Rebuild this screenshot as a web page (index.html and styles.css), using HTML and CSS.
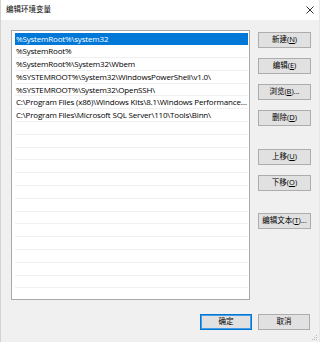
FILE: index.html
```html
<!DOCTYPE html>
<html lang="zh-CN">
<head>
<meta charset="utf-8">
<title>编辑环境变量</title>
<link rel="stylesheet" href="styles.css">
</head>
<body>
<div class="window">
  <div class="titlebar">
    <span class="title">编辑环境变量</span>
    <svg class="close" width="8" height="8" viewBox="0 0 8 8"><path d="M0.5 0.5 L7.5 7.5 M7.5 0.5 L0.5 7.5" stroke="#1a1a1a" stroke-width="0.9" fill="none"/></svg>
  </div>
  <div class="body">
    <div class="content">
      <div class="list">
        <div class="row selected">%SystemRoot%\system32</div>
        <div class="row">%SystemRoot%</div>
        <div class="row">%SystemRoot%\System32\Wbem</div>
        <div class="row">%SYSTEMROOT%\System32\WindowsPowerShell\v1.0\</div>
        <div class="row">%SYSTEMROOT%\System32\OpenSSH\</div>
        <div class="row">C:\Program Files (x86)\Windows Kits\8.1\Windows Performance Toolkit\</div>
        <div class="row">C:\Program Files\Microsoft SQL Server\110\Tools\Binn\</div>
        <div class="row"></div>
        <div class="row"></div>
        <div class="row"></div>
        <div class="row"></div>
        <div class="row"></div>
        <div class="row"></div>
        <div class="row"></div>
        <div class="row"></div>
        <div class="row"></div>
        <div class="row"></div>
        <div class="row"></div>
        <div class="row"></div>
        <div class="row"></div>
        <div class="row"></div>
      </div>
      <div class="side">
        <div class="btn">新建(<u>N</u>)</div>
        <div class="btn">编辑(<u>E</u>)</div>
        <div class="btn">浏览(<u>B</u>)...</div>
        <div class="btn">删除(<u>D</u>)</div>
        <div class="btn group">上移(<u>U</u>)</div>
        <div class="btn">下移(<u>O</u>)</div>
        <div class="btn group2">编辑文本(<u>T</u>)...</div>
      </div>
    </div>
    <div class="footer">
      <div class="btn default">确定</div>
      <div class="btn">取消</div>
    </div>
  </div>
  <svg class="grip" width="7" height="7" viewBox="0 0 7 7" fill="#b9b9b9">
    <rect x="5" y="1" width="1" height="1"/>
    <rect x="3" y="3" width="1" height="1"/><rect x="5" y="3" width="1" height="1"/>
    <rect x="1" y="5" width="1" height="1"/><rect x="3" y="5" width="1" height="1"/><rect x="5" y="5" width="1" height="1"/>
  </svg>
</div>
</body>
</html>
```

FILE: styles.css
```css
html, body {
  margin: 0;
  padding: 0;
}
body {
  width: 320px;
  height: 342px;
  overflow: hidden;
  background: #f0f0f0;
  font-family: "Open Sans", "Noto Sans CJK SC", sans-serif;
  font-size: 8px;
  color: #000;
}
.window {
  position: relative;
  width: 320px;
  height: 342px;
  box-sizing: border-box;
  border-left: 1px solid #d6d2cc;
  border-right: 1px solid #e6e6e6;
  display: flex;
  flex-direction: column;
}
.titlebar {
  height: 20px;
  flex: none;
  background: #fff;
  display: flex;
  align-items: center;
  padding: 0 5px 0 5px;
}
.title {
  flex: 1;
  font-size: 7.5px;
  color: #000;
  line-height: 1;
}
.close {
  display: block;
  margin-top: -1px;
}
.body {
  flex: 1;
  display: flex;
  flex-direction: column;
  padding: 10px 0 0 10px;
}
.content {
  display: flex;
  align-items: flex-start;
}
.list {
  width: 239px;
  height: 270px;
  box-sizing: border-box;
  border: 1px solid #a9a9a9;
  background: #fff;
  padding: 1.5px 1px 0 3px;
  overflow: hidden;
}
.row {
  height: 12.8px;
  box-sizing: border-box;
  border-bottom: 1px solid #f0f0f0;
  line-height: 11.8px;
  padding-left: 1px;
  letter-spacing: -0.18px;
  white-space: nowrap;
  overflow: hidden;
  text-overflow: ellipsis;
}
.row.selected {
  background: #0078d7;
  color: #fff;
  border-bottom-color: #0078d7;
}
.side {
  margin-left: 8px;
  padding-top: 2px;
  width: 53px;
  display: flex;
  flex-direction: column;
  gap: 10px;
}
.btn {
  height: 16px;
  box-sizing: border-box;
  border: 1px solid #adadad;
  background: #e1e1e1;
  display: flex;
  align-items: center;
  justify-content: center;
  white-space: nowrap;
  font-size: 7.5px;
  line-height: 1;
}
.btn u {
  text-decoration-thickness: 0.5px;
  text-underline-offset: 1px;
}
.btn.group {
  margin-top: 13px;
}
.btn.group2 {
  margin-top: 12px;
}
.footer {
  margin-top: 14px;
  padding-right: 9px;
  display: flex;
  justify-content: flex-end;
  gap: 6px;
}
.footer .btn {
  width: 52px;
}
.btn.default {
  border-color: #0078d7;
  box-shadow: inset 0 0 0 1px #4a9be0;
}
.grip {
  position: absolute;
  right: 1px;
  bottom: 1px;
}
```
